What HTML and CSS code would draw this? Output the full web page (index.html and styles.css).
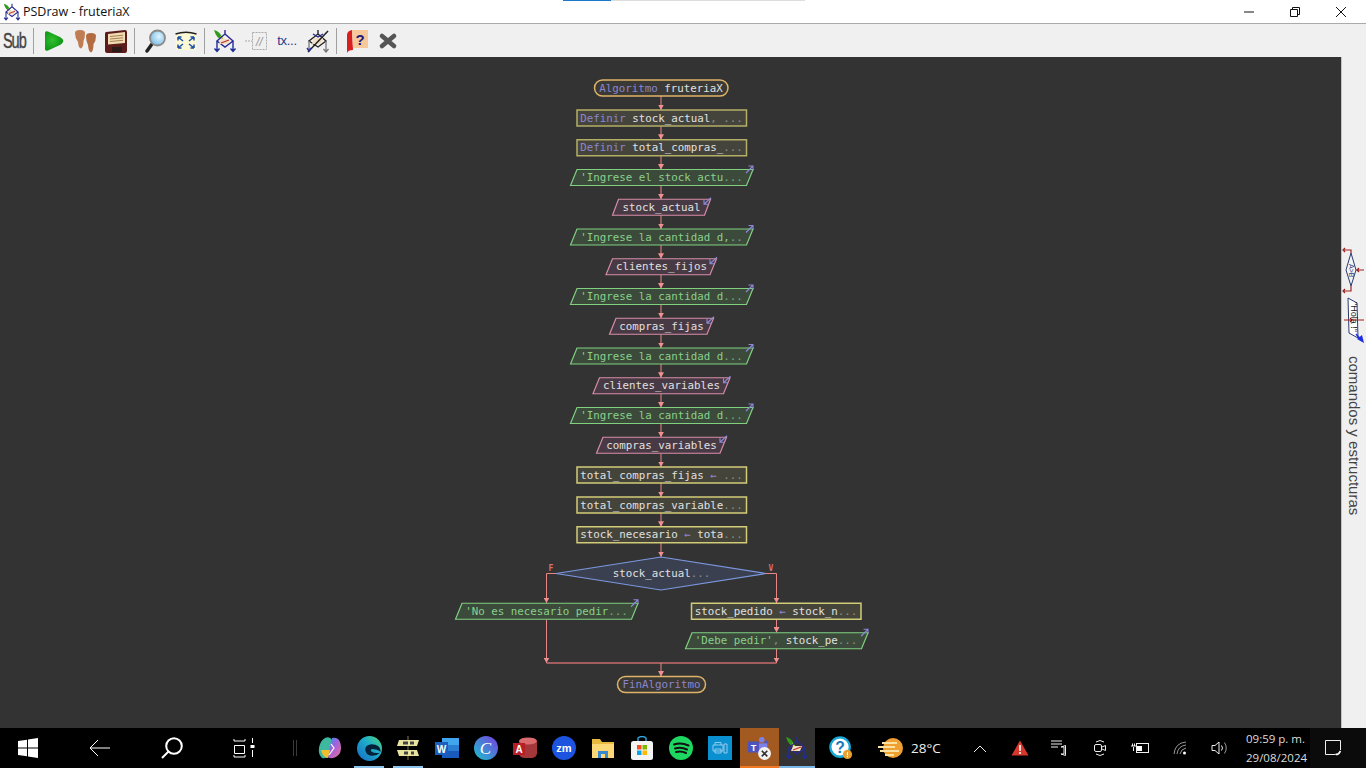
FILE: index.html
```html
<!DOCTYPE html>
<html lang="es">
<head>
<meta charset="utf-8">
<title>PSDraw - fruteriaX</title>
<link rel="stylesheet" href="styles.css">
</head>
<body>
<svg class="defs" width="0" height="0" aria-hidden="true">
  <defs>
    <symbol id="flow" viewBox="0 0 24 24">
      <path d="M1 1Q7 2 10 10Q4 11 1 1Z" fill="#2f9a1c"/>
      <path d="M7 7Q9 8 10 10L7 10Z" fill="#e8d820"/>
      <path d="M12 1V5L4 12L12 18L20 12L12 5" fill="none" stroke="#2a2a96" stroke-width="1.4"/>
      <path d="M8 10L17 10L15 15L6 15Z" fill="#f2dfc4"/>
      <path d="M8 14L16 11" stroke="#c03030" stroke-width="1.3"/>
      <path d="M4 12V22M1.5 19.5L4 22.5L6.500 19.500M20 12V22M17.500 19.500L20 22.500L22.500 19.500" fill="none" stroke="#1e2e96" stroke-width="1.4"/>
    </symbol>
    <marker id="head" markerWidth="7" markerHeight="6" refX="5.500" refY="3" orient="auto" markerUnits="userSpaceOnUse">
      <path d="M0 0L5.500 3L0 6Z" fill="#f09090"/>
    </marker>
  </defs>
</svg>

<header class="titlebar">
  <svg class="title-icon" viewBox="0 0 24 24"><use href="#flow"/></svg>
  <span class="title-text">PSDraw - fruteriaX</span>
  <div class="winctl">
    <span class="winbtn"><svg width="12" height="12" viewBox="0 0 12 12"><path d="M1 6H11" class="ctl"/></svg></span>
    <span class="winbtn"><svg width="12" height="12" viewBox="0 0 12 12"><path d="M1.500 3.500H8.500V10.500H1.500ZM3.500 3.500V1.500H10.500V8.500H8.500" class="ctl"/></svg></span>
    <span class="winbtn"><svg width="12" height="12" viewBox="0 0 12 12"><path d="M1 1L11 11M11 1L1 11" class="ctl"/></svg></span>
  </div>
  <div class="progress"><span class="progress-fill"></span></div>
</header>

<nav class="toolbar">
  <span class="tool tool-sub"><span class="sub-text">Sub</span></span>
  <span class="sep"></span>
  <span class="tool"><svg class="ic" viewBox="0 0 24 24"><defs><radialGradient id="gr" cx=".4" cy=".45" r=".7"><stop offset="0" stop-color="#2fc02f"/><stop offset="1" stop-color="#078a10"/></radialGradient></defs><path d="M3 4Q3 1.500 6 2.500L18 8Q22.500 11 21 13Q20 15 18 16L6 21.500Q3 22.500 3 20Z" fill="url(#gr)"/></svg></span>
  <span class="tool"><svg class="ic" viewBox="0 0 24 24"><path d="M2 4Q2 1 7 1Q12 1 12 4Q12 9 10.500 12Q10.500 18 8 19.500Q5.500 19 5 13Q2 9 2 4Z" fill="#c07c52"/><path d="M13 7Q13 4 18 4Q23 4 23 7Q23 12 20.500 15Q20.500 22 18 23.500Q15.500 23 15 16Q13 12 13 7Z" fill="#b36c42"/></svg></span>
  <span class="tool"><svg class="ic" viewBox="0 0 24 24"><path d="M2 3L21 1Q23 1 23 3V22Q23 24 21 24H3Q1 24 1 22V5Q1 3 2 3Z" fill="#5c1c1c"/><path d="M4 5L21 3V14L4 15.500Z" fill="#f0dcb0"/><path d="M6 7.500L19 6.200M6 10L19 8.800M6 12.500L19 11.300" stroke="#a8805a" stroke-width="1"/><rect x="8" y="18" width="10" height="5" fill="#2a1a1a"/></svg></span>
  <span class="sep"></span>
  <span class="tool"><svg class="ic" viewBox="0 0 24 24"><defs><radialGradient id="lens" cx=".6" cy=".4" r=".7"><stop offset="0" stop-color="#dff4ff"/><stop offset="1" stop-color="#70b8e0"/></radialGradient></defs><path d="M9 15L4 22" stroke="#222" stroke-width="3.400" stroke-linecap="round"/><circle cx="14.500" cy="9" r="7.500" fill="url(#lens)" stroke="#8a8a8a" stroke-width="1.800"/></svg></span>
  <span class="tool"><svg class="ic" viewBox="0 0 24 24"><rect x="1.500" y="4" width="21" height="17" fill="#fbf8d6"/><path d="M1.500 5Q12 1.500 22.500 5" fill="none" stroke="#222" stroke-width="1.500"/><path d="M4 8L9 12M4 8V11.500M4 8H7.500M20 8L15 12M20 8V11.500M20 8H16.500M4 19L9 15M4 19V15.500M4 19H7.500M20 19L15 15M20 19V15.500M20 19H16.500" fill="none" stroke="#1d4fa8" stroke-width="1.500"/></svg></span>
  <span class="sep"></span>
  <span class="tool"><svg class="ic" viewBox="0 0 24 24"><use href="#flow"/></svg></span>
  <span class="tool"><svg class="ic" viewBox="0 0 24 24"><path d="M1 12H8" stroke="#aaa" stroke-dasharray="2 1"/><rect x="8.500" y="3.500" width="14" height="17" fill="none" stroke="#aaa" stroke-dasharray="2 1"/><text x="12" y="17" class="cmt">//</text></svg></span>
  <span class="tool tool-tx">tx...</span>
  <span class="tool"><svg class="ic" viewBox="0 0 24 24"><path d="M12 1V5L3 12L12 18L20 12L12 5" fill="none" stroke="#262626" stroke-width="1.400"/><path d="M8 9L17 9L15 15L6 15Z" fill="#f2dfc4"/><path d="M2 23L22 2" stroke="#222" stroke-width="1.500"/><path d="M7 5L12 8L17 5" fill="none" stroke="#2a2a96" stroke-width="1.400"/><path d="M3 12V21M20 12V23M17.500 20L20 23L22.500 20" fill="none" stroke="#777" stroke-width="1.300"/><path d="M1 19L3 22L5 19" fill="none" stroke="#2a2a96" stroke-width="1.400"/></svg></span>
  <span class="sep"></span>
  <span class="tool"><svg class="ic" viewBox="0 0 24 24"><path d="M2 6Q2 2 7 1L8 21Q3 21 2 24Z" fill="#d81f1f"/><path d="M7 1H23V19H8Z" fill="#f6c89a"/><text x="10.500" y="16" class="help-q">?</text></svg></span>
  <span class="tool"><svg class="ic" viewBox="0 0 24 24"><path d="M6 7L18 17M18 7L6 17" stroke="#555" stroke-width="4.600" stroke-linecap="round"/></svg></span>
</nav>

<main class="workspace">
  <section class="canvas">
    <svg class="flowchart" width="1341" height="671" viewBox="0 57 1341 671">
      <g class="links">
        <path d="M661 96V110" marker-end="url(#head)"/>
        <path d="M661 126V139.750" marker-end="url(#head)"/>
        <path d="M661 155.750V169.500" marker-end="url(#head)"/>
        <path d="M661 185.500V199.250" marker-end="url(#head)"/>
        <path d="M661 215.250V229" marker-end="url(#head)"/>
        <path d="M661 245V258.750" marker-end="url(#head)"/>
        <path d="M661 274.750V288.500" marker-end="url(#head)"/>
        <path d="M661 304.500V318.250" marker-end="url(#head)"/>
        <path d="M661 334.250V348" marker-end="url(#head)"/>
        <path d="M661 364V377.750" marker-end="url(#head)"/>
        <path d="M661 393.750V407.500" marker-end="url(#head)"/>
        <path d="M661 423.500V437.250" marker-end="url(#head)"/>
        <path d="M661 453.250V467" marker-end="url(#head)"/>
        <path d="M661 483V497" marker-end="url(#head)"/>
        <path d="M661 513V526.750" marker-end="url(#head)"/>
        <path d="M661 542.750V557" marker-end="url(#head)"/>
        <path d="M556 573.500H546.500V603" marker-end="url(#head)"/>
        <path d="M766 573.500H776.500V603" marker-end="url(#head)"/>
        <path d="M776.500 619.500V632.500" marker-end="url(#head)"/>
        <path d="M546.500 619.500V663" marker-end="url(#head)"/>
        <path d="M776.500 648.500V663" marker-end="url(#head)"/>
        <path class="join" d="M546.500 663H776.500"/>
        <path d="M661 663V676.500" marker-end="url(#head)"/>
      </g>

      <rect class="term" x="594.500" y="80" width="133.500" height="16" rx="8"/>
      <text class="t" x="661" y="91.500"><tspan class="kw">Algoritmo</tspan> <tspan class="id">fruteriaX</tspan></text>

      <g transform="translate(0,118)"><rect class="def" x="577" y="-8" width="169.500" height="16"/><text class="t" x="661.500" y="3.500"><tspan class="kw">Definir</tspan> <tspan class="id">stock_actual</tspan><tspan class="dim">, ...</tspan></text></g>
      <g transform="translate(0,147.750)"><rect class="def" x="577" y="-8" width="169.500" height="16"/><text class="t" x="661.500" y="3.500"><tspan class="kw">Definir</tspan> <tspan class="id">total_compras_</tspan><tspan class="dim">...</tspan></text></g>

      <g transform="translate(0,177.500)"><polygon class="out" points="570.500,8 577,-8 753,-8 746.500,8"/><path class="io" d="M746-4.500L752.500-11M748.500-11.500H753V-7"/><text class="t" x="661.500" y="3.500"><tspan class="str">'Ingrese el stock actu</tspan><tspan class="sdim">...</tspan></text></g>
      <g transform="translate(0,207.250)"><polygon class="inp" points="612.500,8 618.500,-8 710.500,-8 704.500,8"/><path class="io" d="M711-9.500L704.500-3.500M704-7.500V-3H708.500"/><text class="t" x="661.500" y="3.500"><tspan class="id">stock_actual</tspan></text></g>
      <g transform="translate(0,237)"><polygon class="out" points="570.500,8 577,-8 753,-8 746.500,8"/><path class="io" d="M746-4.500L752.500-11M748.500-11.500H753V-7"/><text class="t" x="661.500" y="3.500"><tspan class="str">'Ingrese la cantidad d,</tspan><tspan class="sdim">..</tspan></text></g>
      <g transform="translate(0,266.750)"><polygon class="inp" points="606,8 612.500,-8 716.500,-8 710,8"/><path class="io" d="M717-9.500L710.500-3.500M710-7.500V-3H714.500"/><text class="t" x="661.500" y="3.500"><tspan class="id">clientes_fijos</tspan></text></g>
      <g transform="translate(0,296.500)"><polygon class="out" points="570.500,8 577,-8 753,-8 746.500,8"/><path class="io" d="M746-4.500L752.500-11M748.500-11.500H753V-7"/><text class="t" x="661.500" y="3.500"><tspan class="str">'Ingrese la cantidad d</tspan><tspan class="sdim">...</tspan></text></g>
      <g transform="translate(0,326.250)"><polygon class="inp" points="609.500,8 616,-8 713.500,-8 707,8"/><path class="io" d="M714-9.500L707.500-3.500M707-7.500V-3H711.500"/><text class="t" x="661.500" y="3.500"><tspan class="id">compras_fijas</tspan></text></g>
      <g transform="translate(0,356)"><polygon class="out" points="570.500,8 577,-8 753,-8 746.500,8"/><path class="io" d="M746-4.500L752.500-11M748.500-11.500H753V-7"/><text class="t" x="661.500" y="3.500"><tspan class="str">'Ingrese la cantidad d</tspan><tspan class="sdim">...</tspan></text></g>
      <g transform="translate(0,385.750)"><polygon class="inp" points="593,8 599.500,-8 730,-8 723.500,8"/><path class="io" d="M730.500-9.500L724-3.500M723.500-7.500V-3H728"/><text class="t" x="661.500" y="3.500"><tspan class="id">clientes_variables</tspan></text></g>
      <g transform="translate(0,415.500)"><polygon class="out" points="570.500,8 577,-8 753,-8 746.500,8"/><path class="io" d="M746-4.500L752.500-11M748.500-11.500H753V-7"/><text class="t" x="661.500" y="3.500"><tspan class="str">'Ingrese la cantidad d</tspan><tspan class="sdim">...</tspan></text></g>
      <g transform="translate(0,445.250)"><polygon class="inp" points="596.500,8 603,-8 726.500,-8 720,8"/><path class="io" d="M727-9.500L720.500-3.500M720-7.500V-3H724.500"/><text class="t" x="661.500" y="3.500"><tspan class="id">compras_variables</tspan></text></g>

      <g transform="translate(0,475)"><rect class="asg" x="577" y="-8" width="169.500" height="16"/><text class="t" x="661.500" y="3.500"><tspan class="id">total_compras_fijas</tspan> <tspan class="kw">←</tspan> <tspan class="dim">...</tspan></text></g>
      <g transform="translate(0,505)"><rect class="asg" x="577" y="-8" width="169.500" height="16"/><text class="t" x="661.500" y="3.500"><tspan class="id">total_compras_variable</tspan><tspan class="dim">...</tspan></text></g>
      <g transform="translate(0,534.750)"><rect class="asg" x="577" y="-8" width="169.500" height="16"/><text class="t" x="661.500" y="3.500"><tspan class="id">stock_necesario</tspan> <tspan class="kw">←</tspan> <tspan class="id">tota</tspan><tspan class="dim">...</tspan></text></g>

      <polygon class="dec" points="661,557 766,573.500 661,590 556,573.500"/>
      <text class="t" x="661.500" y="576.500"><tspan class="id">stock_actual</tspan><tspan class="dim">...</tspan></text>
      <text class="flag" x="551" y="571">F</text>
      <text class="flag" x="771" y="571">V</text>

      <g transform="translate(0,611.250)"><polygon class="out" points="455.500,8 462,-8 638,-8 631.500,8"/><path class="io" d="M631-4.500L637.500-11M633.500-11.500H638V-7"/><text class="t" x="546.500" y="3.500"><tspan class="str">'No es necesario pedir</tspan><tspan class="sdim">...</tspan></text></g>
      <g transform="translate(0,611.250)"><rect class="asg" x="691.500" y="-8" width="169.500" height="16"/><text class="t" x="776" y="3.500"><tspan class="id">stock_pedido</tspan> <tspan class="kw">←</tspan> <tspan class="id">stock_n</tspan><tspan class="dim">...</tspan></text></g>
      <g transform="translate(0,640.750)"><polygon class="out" points="685.500,8 692,-8 868,-8 861.500,8"/><path class="io" d="M861-4.500L867.500-11M863.500-11.500H868V-7"/><text class="t" x="776" y="3.500"><tspan class="str">'Debe pedir'</tspan><tspan class="dim">,</tspan> <tspan class="id">stock_pe</tspan><tspan class="dim">...</tspan></text></g>

      <rect class="term" x="617.500" y="676.500" width="88" height="16" rx="8"/>
      <text class="t" x="661.500" y="688"><tspan class="kw">FinAlgoritmo</tspan></text>
    </svg>
  </section>
  <aside class="sidepanel">
    <svg class="side-icons" width="24" height="106" viewBox="0 0 24 106">
      <path class="side-red" d="M9 12V9H2M3 7L1 9L3 11M14 29H22M17 27L15 29L17 31M9 45V50H2M3 48L1 50L3 52"/>
      <polygon class="side-shape" points="9,12 14,29 9,45 4,29"/>
      <text class="side-t" transform="translate(6.500,23) rotate(90)">A&gt;B</text>
      <polygon class="side-shape side-white" points="6,57 15,62 16,97 7,92"/>
      <path class="side-red" d="M2 79H22M8 77L10 79L8 81"/>
      <text class="side-t side-hola" transform="translate(8.500,61) rotate(90)">"Hola !"</text>
      <path class="side-blue" d="M14 93L20 100"/>
      <path d="M22 102L15 98L20 94Z" fill="#1e2ee0"/>
    </svg>
    <span class="side-label">comandos y estructuras</span>
  </aside>
</main>

<footer class="taskbar">
  <div class="tb-left">
    <span class="tb-wide tb-first"><svg width="20" height="20" viewBox="0 0 20 20"><path d="M0 3L9 1.700V9.500H0ZM10 1.500L20 0V9.500H10ZM0 10.500H9V18.300L0 17ZM10 10.500H20V20L10 18.500Z" fill="#fff"/></svg></span>
    <span class="tb-wide"><svg width="22" height="18" viewBox="0 0 22 18"><path d="M21 9H1M9 1L1 9L9 17" class="wline"/></svg></span>
    <span class="tb-wide"><svg width="22" height="22" viewBox="0 0 22 22"><circle cx="13" cy="9" r="7.800" class="wthick"/><path d="M7.500 14.500L1 21" class="wthick"/></svg></span>
    <span class="tb-wide"><svg width="22" height="20" viewBox="0 0 22 20"><path d="M1 3H12M1 19H12M1.500 7.500H11.500V15.500H1.500ZM1 1V3M12 1V3M1 17V19M12 17V19M19.500 0V5M19.500 12V19" class="wline"/><rect x="17.500" y="7" width="4" height="3" fill="#fff"/></svg></span>
    <span class="tb-sep"><i></i><i></i></span>
  </div>
  <div class="tb-apps">
    <span class="app"><svg class="ai" viewBox="0 0 24 24"><defs><linearGradient id="cop" x1="0" y1="0" x2="1" y2="1"><stop offset="0" stop-color="#2f9be8"/><stop offset=".45" stop-color="#a060e0"/><stop offset="1" stop-color="#f07090"/></linearGradient></defs><path d="M7 2Q12 0 14 4L11 20Q8 23 4 22Q0 18 1 12Q2 5 7 2Z" fill="#3fb8a0"/><path d="M14 2Q20 1 22 6Q24 12 22 17Q18 23 12 22Q9 22 10 18L14 2Z" fill="url(#cop)"/><path d="M3 14Q5 22 10 22L12 14Z" fill="#f0c030"/><path d="M13 8L16 12L11 19" fill="none" stroke="#fff" stroke-width="1.200"/></svg></span>
    <span class="app"><svg class="ai ai-big" viewBox="0 0 24 24"><defs><linearGradient id="edg" x1="0" y1="1" x2="1" y2="0"><stop offset="0" stop-color="#1467c8"/><stop offset=".6" stop-color="#20b0c8"/><stop offset="1" stop-color="#50d870"/></linearGradient></defs><circle cx="12" cy="12" r="12" fill="url(#edg)"/><path d="M23 15Q22 8 14 8Q7 9 8 14Q9 19 15 19Q19 19 22 16Q17 17 14 15Q12 13 15 12.500Q19 12.500 23 15Z" fill="#04213a"/></svg><em class="under"></em></span>
    <span class="app"><svg class="ai" viewBox="0 0 24 24"><path d="M12 0V24" stroke="#8a7a50" stroke-width="1"/><path d="M3 4H23L21 10H1Z" fill="#e8e4a0"/><path d="M7 5.500H12V8.500H7ZM14 5.500H18V8.500H14Z" fill="#444"/><path d="M1 14H21L23 20H3Z" fill="#e8e4a0"/><path d="M8 15.500H12V18.500H8ZM15 15.500H18V18.500H15Z" fill="#444"/></svg><em class="under"></em></span>
    <span class="app"><svg class="ai" viewBox="0 0 24 24"><rect x="7" y="2" width="17" height="20" fill="#2b7cd3"/><rect x="7" y="2" width="17" height="7" fill="#41a5ee"/><rect x="7" y="15" width="17" height="7" fill="#185abd"/><rect x="0" y="6" width="13" height="13" fill="#1b5ebe"/><text x="6.500" y="16.500" class="word-w">W</text></svg></span>
    <span class="app"><svg class="ai" viewBox="0 0 24 24"><defs><linearGradient id="can" x1="0" y1="1" x2="1" y2="0"><stop offset="0" stop-color="#18c4cc"/><stop offset="1" stop-color="#7a3ce0"/></linearGradient></defs><circle cx="12" cy="12" r="12" fill="url(#can)"/><text x="11.500" y="18" class="canva-c">C</text></svg></span>
    <span class="app"><svg class="ai" viewBox="0 0 24 24"><rect x="6" y="2" width="18" height="20" rx="5" fill="#a4373a"/><ellipse cx="15" cy="5" rx="9" ry="3.500" fill="#d96a6d"/><rect x="0" y="7" width="12" height="12" fill="#b81e25"/><text x="6" y="16.500" class="word-w">A</text></svg></span>
    <span class="app"><svg class="ai" viewBox="0 0 24 24"><circle cx="12" cy="12" r="12" fill="#1c54e0"/><text x="12" y="16" class="zm">zm</text></svg></span>
    <span class="app"><svg class="ai" viewBox="0 0 24 24"><path d="M1 3H9L11 6H23V22H1Z" fill="#e8b93f"/><path d="M1 8H23V22H1Z" fill="#fcd877"/><path d="M7 22V15H17V22H14V18H10V22Z" fill="#3a8ad0"/></svg></span>
    <span class="app"><svg class="ai" viewBox="0 0 24 24"><path d="M8 5V2Q12 -1 16 2V5" fill="none" stroke="#30a8e0" stroke-width="1.400"/><rect x="1" y="5" width="22" height="19" rx="2.500" fill="#f4f4f4"/><rect x="7" y="9" width="4.500" height="4.500" fill="#f25022"/><rect x="12.500" y="9" width="4.500" height="4.500" fill="#7fba00"/><rect x="7" y="14.500" width="4.500" height="4.500" fill="#00a4ef"/><rect x="12.500" y="14.500" width="4.500" height="4.500" fill="#ffb900"/></svg></span>
    <span class="app"><svg class="ai" viewBox="0 0 24 24"><circle cx="12" cy="12" r="12" fill="#1ed760"/><path d="M5 8.500Q12 6 19.500 9.500M6 12.500Q12 10.500 18 13.500M7 16Q12 14.500 17 17" fill="none" stroke="#111" stroke-width="2" stroke-linecap="round"/></svg></span>
    <span class="app"><svg class="ai" viewBox="0 0 24 24"><rect width="24" height="24" fill="#0a8fd0"/><path d="M7 9V6.500H13V9M5 9H15V15H5ZM7 13H13V17H7ZM16 8H19V17H16Z" fill="none" stroke="#9fd2ee" stroke-width=".9"/></svg></span>
    <span class="app app-teams"><svg class="ai" viewBox="0 0 26 26"><circle cx="16" cy="4" r="3" fill="#7b83eb"/><circle cx="21" cy="7" r="2.200" fill="#5059c9"/><path d="M10 8H22V18H10Z" fill="#7b83eb"/><rect x="1" y="6" width="12" height="12" rx="1" fill="#4b53bc"/><text x="7" y="16" class="word-w">T</text><circle cx="19" cy="19" r="7" fill="#f2f2f2"/><path d="M16 16L22 22M22 16L16 22" stroke="#333" stroke-width="1.800"/></svg></span>
    <span class="app app-psd"><svg class="ai" viewBox="0 0 24 24"><use href="#flow"/></svg></span>
  </div>
  <span class="help-item"><svg class="ai" viewBox="0 0 26 26"><circle cx="12" cy="12" r="10.500" fill="#fff" stroke="#18a8d8" stroke-width="2.500"/><text x="12" y="18" class="hq">?</text><circle cx="20" cy="20" r="5" fill="#e8a030"/><path d="M20 17.500V20.500M20 21.500V23" stroke="#fff" stroke-width="1.200"/></svg></span>
  <span class="weather"><svg width="26" height="24" viewBox="0 0 26 24"><circle cx="16" cy="12" r="10" fill="#f0a030"/><path d="M5 7H20M1 11H18M3 15H22M8 19H17" stroke="#fbe2a0" stroke-width="1.800"/></svg><span class="temp">28°C</span></span>
  <div class="tray">
    <span class="tray-i"><svg width="14" height="9" viewBox="0 0 14 9"><path d="M1 8L7 2L13 8" class="wthin"/></svg></span>
    <span class="tray-i"><svg width="18" height="16" viewBox="0 0 18 16"><path d="M9 0.500L17.500 15.500H.5Z" fill="#d8382c"/><path d="M9 5V11M9 12V14" stroke="#fff" stroke-width="1.600"/></svg></span>
    <span class="tray-i"><svg width="18" height="16" viewBox="0 0 18 16"><path d="M0 1H11M0 4H11M0 7H7M10 7H13V14H10L14.500 15.500V5.500L10 7" class="wthin"/></svg></span>
    <span class="tray-i"><svg width="14" height="18" viewBox="0 0 14 18"><path d="M3 3Q7 0 11 3M3 15Q7 18 11 15" class="wthin"/><rect x="1.500" y="5.500" width="7" height="7" rx="1.500" class="wthin"/><path d="M9 8L12.500 6.500V11.500L9 10" class="wthin"/></svg></span>
    <span class="tray-i"><svg width="18" height="12" viewBox="0 0 18 12"><rect x="5.500" y="1.500" width="12" height="9" class="wthin"/><rect x="6" y="4" width="5" height="5" fill="#fff"/><path d="M0 4H5M1.500 1.500V4M3.500 1.500V4M2.500 5V9" class="wthin"/></svg></span>
    <span class="tray-i"><svg width="14" height="14" viewBox="0 0 14 14"><path d="M1 13Q2 2 13 1M4 13Q5 5 13 4M7 13Q8 8 13 7" class="wdim"/><circle cx="11.500" cy="12" r="1.500" fill="#fff"/></svg></span>
    <span class="tray-i"><svg width="18" height="14" viewBox="0 0 18 14"><path d="M1 4.500H4L8 1V13L4 9.500H1Z" class="wthin"/><path d="M10.500 4.500Q12.500 7 10.500 9.500" class="wthin"/><path d="M13.500 1.500Q17 7 13.500 12.500" class="wdim"/></svg></span>
    <span class="clock"><span>09:59 p. m.</span><span>29/08/2024</span></span>
    <span class="notify"><svg width="17" height="16" viewBox="0 0 17 16"><path d="M10 14.500H.5V.5H15.500V10" class="wthin"/><path d="M10.500 14Q13 15.500 15.500 11" fill="none" stroke="#fff" stroke-width="1.600"/></svg></span>
  </div>
</footer>
</body>
</html>
```
FILE: styles.css
```css
* { box-sizing: border-box; }
html, body { margin: 0; padding: 0; }
body {
  width: 1366px;
  height: 768px;
  overflow: hidden;
  display: flex;
  flex-direction: column;
  background: #f0f0f0;
  font-family: "Open Sans", "Liberation Sans", sans-serif;
}
.defs { position: absolute; }

/* title bar */
.titlebar {
  position: relative;
  height: 24px;
  flex: none;
  display: flex;
  align-items: center;
  background: #fff;
  border-bottom: 1px solid #aaa;
}
.title-icon { width: 18px; height: 18px; margin-left: 3px; }
.title-text { margin-left: 2px; font-size: 12.500px; color: #111; }
.winctl { margin-left: auto; display: flex; padding-right: 2px; }
.winbtn { width: 46px; height: 23px; display: flex; align-items: center; justify-content: center; }
.ctl { fill: none; stroke: #111; stroke-width: 1; }
.progress { position: absolute; left: 563px; top: 0; width: 242px; height: 1px; background: #ddd; }
.progress-fill { display: block; width: 48px; height: 1px; background: #1a78c8; }

/* toolbar */
.toolbar {
  height: 33px;
  flex: none;
  display: flex;
  align-items: center;
  background: #f0f0f0;
}
.tool { width: 31px; height: 33px; display: flex; align-items: center; justify-content: center; }
.tool-sub { width: 28px; }
.sub-text {
  font: 22px "Liberation Sans", sans-serif;
  color: #444;
  letter-spacing: -1.500px;
  white-space: nowrap;
  transform: scaleX(.66);
  -webkit-text-stroke: .4px #444;
}
.sep { width: 1px; height: 26px; margin: 0 4.5px 0 2.5px; background: #a0a0a0; }
.tool-sub + .sep { margin-left: 5px; }
.ic { width: 24px; height: 24px; }
.cmt { font: italic 12px "Liberation Sans", sans-serif; fill: #999; }
.help-q { font: bold 15px "Liberation Sans", sans-serif; fill: #1a1a80; }
.tool-tx { font: 13px "Liberation Sans", sans-serif; color: #2a3a8a; letter-spacing: -.3px; }

/* workspace */
.workspace { flex: 1; display: flex; min-height: 0; }
.canvas { width: 1341px; background: #333; }
.flowchart { display: block; }
.links path { fill: none; stroke: #e88686; stroke-width: 1; }
.links .join { stroke: #c96e6e; stroke-width: 1.500; }
.term { fill: #3b3935; stroke: #e0b468; stroke-width: 1.500; }
.def { fill: #45443c; stroke: #b4ae66; stroke-width: 1.500; }
.asg { fill: #45443a; stroke: #d2cc78; stroke-width: 1.500; }
.out { fill: #3c4a3c; stroke: #80d080; stroke-width: 1.200; }
.inp { fill: #483a44; stroke: #d88ca8; stroke-width: 1.200; }
.dec { fill: #3a4050; stroke: #7c98e0; stroke-width: 1.200; }
.io { fill: none; stroke: #8a8ad8; stroke-width: 1.100; }
.t { font: 10.800px "DejaVu Sans Mono", monospace; text-anchor: middle; }
.kw { fill: #8a86d0; }
.id { fill: #e0e0e0; }
.str { fill: #8ad08a; }
.dim { fill: #8d8d80; }
.sdim { fill: #7aa87a; }
.flag { font: bold 8px "DejaVu Sans Mono", monospace; text-anchor: middle; fill: #d87070; }

/* side panel */
.sidepanel {
  width: 25px;
  border-left: 1px solid #c4c4c4;
  background: #f0f0f0;
  position: relative;
  display: flex;
  flex-direction: column;
  align-items: center;
}
.side-icons { position: absolute; left: 0; top: 184px; }
.side-label {
  margin-top: 299px;
  writing-mode: vertical-rl;
  font: 15px "Liberation Sans", sans-serif;
  color: #444;
}
.side-red { fill: none; stroke: #a02020; stroke-width: 1.200; }
.side-blue { fill: none; stroke: #1e2ee0; stroke-width: 1.500; }
.side-shape { fill: #f4f4f4; stroke: #2a3a70; stroke-width: 1; }
.side-white { fill: #fff; }
.side-t { font: 7px "Liberation Sans", sans-serif; fill: #2a3a80; }
.side-hola { font-size: 9px; fill: #222; }

/* taskbar */
.taskbar {
  height: 40px;
  flex: none;
  display: flex;
  align-items: stretch;
  background: #000;
  color: #e6e6e6;
}
.tb-left { display: flex; margin-left: -8px; }
.tb-wide { width: 72px; display: flex; align-items: center; justify-content: center; }
.tb-sep { width: 30.500px; display: flex; align-items: center; justify-content: center; gap: 2px; }
.tb-sep i { display: block; width: 1px; height: 16px; background: #3a3a3a; }
.tb-apps { display: flex; }
.app { position: relative; width: 39px; display: flex; align-items: center; justify-content: center; }
.ai { width: 24px; height: 24px; }
.ai-big { width: 25px; height: 25px; }
.under { position: absolute; left: 4.500px; right: 4.500px; bottom: 0; height: 2px; background: #8cc4ec; }
.app-teams { background: #a35a20; box-shadow: inset 0 -2px #f07820; }
.app-psd { width: 36.500px; background: #333; box-shadow: inset 0 -2px #7ab8e8; }
.help-item { width: 52px; display: flex; align-items: center; justify-content: center; }
.weather { margin-left: 10px; display: flex; align-items: center; gap: 8px; font-size: 13.500px; }
.temp { color: #eee; }
.tray { margin-left: auto; display: flex; }
.tray-i { width: 40px; display: flex; align-items: center; justify-content: center; }
.clock {
  width: 70px;
  padding-left: 6px;
  display: flex;
  flex-direction: column;
  justify-content: center;
  font-size: 11.500px;
  line-height: 19px;
  white-space: nowrap;
  color: #ddd;
}
.notify { width: 56px; padding-right: 10px; background: #0b0b0b; display: flex; align-items: center; justify-content: center; }
.wline { fill: none; stroke: #fff; stroke-width: 1; }
.wthick { fill: none; stroke: #fff; stroke-width: 2; }
.wthin { fill: none; stroke: #eee; stroke-width: 1; }
.wdim { fill: none; stroke: #999; stroke-width: 1; }
.word-w { font: bold 10px "Liberation Sans", sans-serif; fill: #fff; text-anchor: middle; }
.canva-c { font: italic 17px "Liberation Serif", serif; fill: #fff; text-anchor: middle; }
.zm { font: bold 11px "Liberation Sans", sans-serif; fill: #fff; text-anchor: middle; }
.hq { font: bold 17px "Liberation Sans", sans-serif; fill: #1a78b8; text-anchor: middle; }
```
